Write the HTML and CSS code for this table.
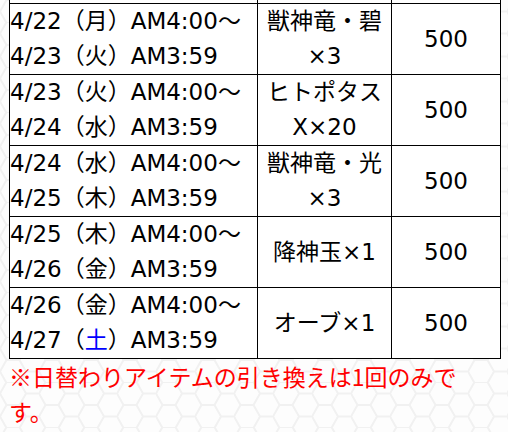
FILE: index.html
```html
<!DOCTYPE html>
<html lang="ja">
<head>
<meta charset="utf-8">
<link rel="stylesheet" href="styles.css">
</head>
<body>
<div class="wrap">
  <table class="schedule">
    <colgroup>
      <col class="c-date">
      <col class="c-item">
      <col class="c-pt">
    </colgroup>
    <tr class="cut"><td></td><td></td><td></td></tr>
    <tr>
      <td class="date">4/22（月）AM4:00～<br>4/23（火）AM3:59</td>
      <td class="item">獣神竜・碧<br>×3</td>
      <td class="pt">500</td>
    </tr>
    <tr>
      <td class="date">4/23（火）AM4:00～<br>4/24（水）AM3:59</td>
      <td class="item">ヒトポタス<br>X×20</td>
      <td class="pt">500</td>
    </tr>
    <tr>
      <td class="date">4/24（水）AM4:00～<br>4/25（木）AM3:59</td>
      <td class="item">獣神竜・光<br>×3</td>
      <td class="pt">500</td>
    </tr>
    <tr>
      <td class="date">4/25（木）AM4:00～<br>4/26（金）AM3:59</td>
      <td class="item">降神玉×1</td>
      <td class="pt">500</td>
    </tr>
    <tr>
      <td class="date">4/26（金）AM4:00～<br>4/27（<span class="sat">土</span>）AM3:59</td>
      <td class="item">オーブ×1</td>
      <td class="pt">500</td>
    </tr>
  </table>
  <p class="note">※日替わりアイテムの引き換えは1回のみです。</p>
</div>
</body>
</html>
```
FILE: styles.css
```css
html, body {
  margin: 0;
  padding: 0;
}
body {
  font-family: "DejaVu Sans", "Noto Sans CJK JP", sans-serif;
  font-size: 23px;
  line-height: 35px;
  color: #000;
  background-color: #fdfdfd;
  background-image: url("data:image/svg+xml,%3Csvg xmlns='http://www.w3.org/2000/svg' width='39' height='22.5'%3E%3Cpath d='M0 11.25L6.5 0H19.5L26 11.25L19.5 22.5H6.5ZM26 11.25H39' fill='none' stroke='%23f1f1f1' stroke-width='2'/%3E%3C/svg%3E");
  height: 432px;
  overflow: hidden;
}
.wrap {
  padding: 0 8px 0 9px;
}
.schedule {
  border-collapse: collapse;
  table-layout: fixed;
  width: 491px;
}
.c-date { width: 248px; }
.c-item { width: 134px; }
.c-pt { width: 109px; }
.schedule td {
  border: 1px solid #000;
  padding: 0;
  background: #fff;
  vertical-align: middle;
  white-space: nowrap;
}
.schedule .cut td {
  border-top: none;
  height: 3px;
  line-height: 3px;
  font-size: 0;
}
.date {
  text-align: left;
}
.item, .pt {
  text-align: center;
}
.sat {
  color: #0000ff;
}
.note {
  margin: 0;
  color: #ff0000;
  width: 491px;
  font-family: "Noto Sans CJK JP", sans-serif;
}
```
